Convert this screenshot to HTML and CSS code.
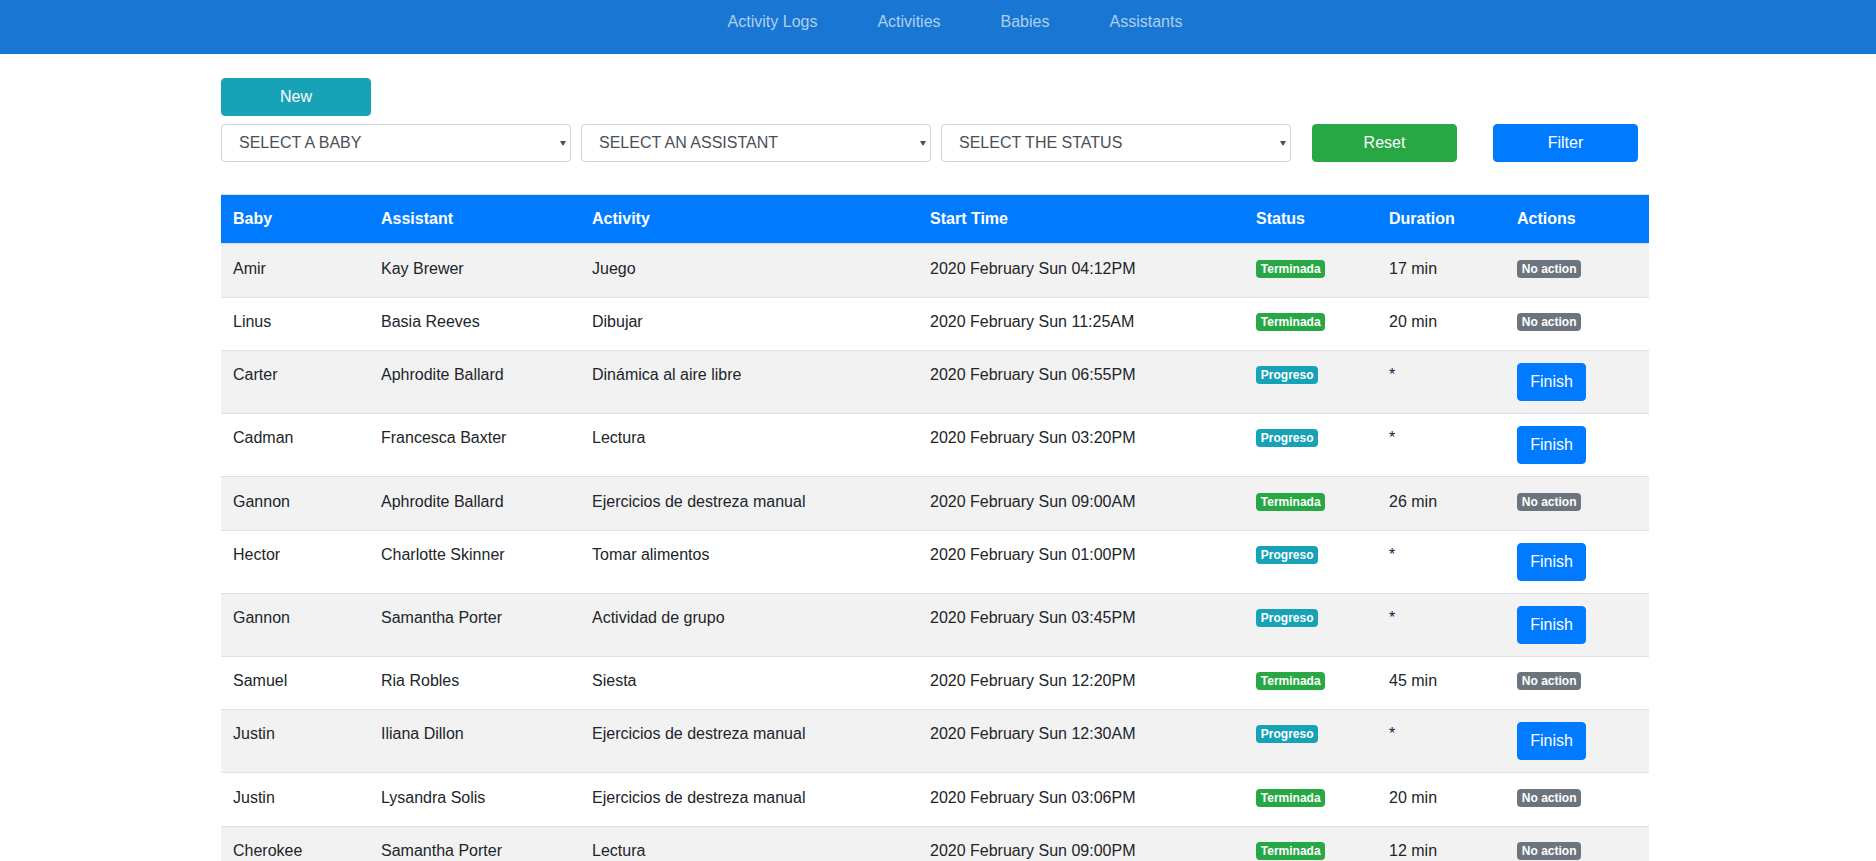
FILE: index.html
```html
<!DOCTYPE html>
<html lang="en">
<head>
<meta charset="utf-8">
<title>Activity Logs</title>
<link rel="stylesheet" href="styles.css">
</head>
<body>
<nav class="topbar">
  <a class="nav-link" href="#">Activity Logs</a>
  <a class="nav-link" href="#">Activities</a>
  <a class="nav-link" href="#">Babies</a>
  <a class="nav-link" href="#">Assistants</a>
</nav>
<main class="page">
  <div class="actions-row">
    <button class="btn btn-info btn-new">New</button>
  </div>
  <div class="filters">
    <div class="select-wrap"><select class="select"><option>SELECT A BABY</option></select></div>
    <div class="select-wrap"><select class="select"><option>SELECT AN ASSISTANT</option></select></div>
    <div class="select-wrap"><select class="select"><option>SELECT THE STATUS</option></select></div>
    <button class="btn btn-success btn-reset">Reset</button>
    <button class="btn btn-primary btn-filter">Filter</button>
  </div>
  <table class="table">
    <colgroup>
      <col class="c-baby"><col class="c-assistant"><col class="c-activity"><col class="c-start"><col class="c-status"><col class="c-duration"><col class="c-actions">
    </colgroup>
    <thead>
      <tr><th>Baby</th><th>Assistant</th><th>Activity</th><th>Start Time</th><th>Status</th><th>Duration</th><th>Actions</th></tr>
    </thead>
    <tbody>
      <tr><td>Amir</td><td>Kay Brewer</td><td>Juego</td><td>2020 February Sun 04:12PM</td><td><span class="badge badge-success">Terminada</span></td><td>17 min</td><td><span class="badge badge-secondary">No action</span></td></tr>
      <tr><td>Linus</td><td>Basia Reeves</td><td>Dibujar</td><td>2020 February Sun 11:25AM</td><td><span class="badge badge-success">Terminada</span></td><td>20 min</td><td><span class="badge badge-secondary">No action</span></td></tr>
      <tr class="tall"><td>Carter</td><td>Aphrodite Ballard</td><td>Dinámica al aire libre</td><td>2020 February Sun 06:55PM</td><td><span class="badge badge-info">Progreso</span></td><td>*</td><td><button class="btn btn-primary btn-finish">Finish</button></td></tr>
      <tr class="tall"><td>Cadman</td><td>Francesca Baxter</td><td>Lectura</td><td>2020 February Sun 03:20PM</td><td><span class="badge badge-info">Progreso</span></td><td>*</td><td><button class="btn btn-primary btn-finish">Finish</button></td></tr>
      <tr><td>Gannon</td><td>Aphrodite Ballard</td><td>Ejercicios de destreza manual</td><td>2020 February Sun 09:00AM</td><td><span class="badge badge-success">Terminada</span></td><td>26 min</td><td><span class="badge badge-secondary">No action</span></td></tr>
      <tr class="tall"><td>Hector</td><td>Charlotte Skinner</td><td>Tomar alimentos</td><td>2020 February Sun 01:00PM</td><td><span class="badge badge-info">Progreso</span></td><td>*</td><td><button class="btn btn-primary btn-finish">Finish</button></td></tr>
      <tr class="tall"><td>Gannon</td><td>Samantha Porter</td><td>Actividad de grupo</td><td>2020 February Sun 03:45PM</td><td><span class="badge badge-info">Progreso</span></td><td>*</td><td><button class="btn btn-primary btn-finish">Finish</button></td></tr>
      <tr><td>Samuel</td><td>Ria Robles</td><td>Siesta</td><td>2020 February Sun 12:20PM</td><td><span class="badge badge-success">Terminada</span></td><td>45 min</td><td><span class="badge badge-secondary">No action</span></td></tr>
      <tr class="tall"><td>Justin</td><td>Iliana Dillon</td><td>Ejercicios de destreza manual</td><td>2020 February Sun 12:30AM</td><td><span class="badge badge-info">Progreso</span></td><td>*</td><td><button class="btn btn-primary btn-finish">Finish</button></td></tr>
      <tr><td>Justin</td><td>Lysandra Solis</td><td>Ejercicios de destreza manual</td><td>2020 February Sun 03:06PM</td><td><span class="badge badge-success">Terminada</span></td><td>20 min</td><td><span class="badge badge-secondary">No action</span></td></tr>
      <tr><td>Cherokee</td><td>Samantha Porter</td><td>Lectura</td><td>2020 February Sun 09:00PM</td><td><span class="badge badge-success">Terminada</span></td><td>12 min</td><td><span class="badge badge-secondary">No action</span></td></tr>
    </tbody>
  </table>
</main>
</body>
</html>
```

FILE: styles.css
```css
* { box-sizing: border-box; }

html, body {
  margin: 0;
  padding: 0;
  background: #ffffff;
  color: #212529;
  font-family: "Liberation Sans", Arial, sans-serif;
  font-size: 16px;
  line-height: 24px;
}

.topbar {
  height: 54px;
  background: #1976d2;
  display: flex;
  justify-content: center;
  align-items: flex-start;
  padding: 10px 0 0 34px;
}

.nav-link {
  color: #afcfef;
  text-decoration: none;
  padding: 0 30px;
  font-size: 16px;
  line-height: 24px;
}

.page {
  width: 1428px;
  margin: 24px 0 0 221px;
}

.actions-row {
  display: flex;
  height: 38px;
}

.btn {
  font-family: "Liberation Sans", Arial, sans-serif;
  font-size: 16px;
  line-height: 24px;
  padding: 6px 12px;
  border: 1px solid transparent;
  border-radius: 4px;
  color: #ffffff;
  text-align: center;
  cursor: pointer;
  height: 38px;
}

.btn-info { background: #17a2b8; border-color: #17a2b8; }
.btn-success { background: #28a745; border-color: #28a745; }
.btn-primary { background: #007bff; border-color: #007bff; }

.btn-new { width: 150px; }

.filters {
  display: flex;
  align-items: center;
  margin-top: 8px;
  height: 38px;
}

.select-wrap {
  position: relative;
  width: 350px;
  height: 38px;
  margin-right: 10px;
}

.select-wrap:nth-child(3) { margin-right: 0; }

.select-wrap::after {
  content: "";
  position: absolute;
  right: 5px;
  top: 17px;
  border-left: 3px solid transparent;
  border-right: 3px solid transparent;
  border-top: 5px solid #495057;
  pointer-events: none;
}

.select {
  -webkit-appearance: none;
  appearance: none;
  width: 100%;
  height: 38px;
  padding: 6px 20px 6px 17px;
  border: 1px solid #ced4da;
  border-radius: 4px;
  background: #ffffff;
  color: #495057;
  font-family: "Liberation Sans", Arial, sans-serif;
  font-size: 16px;
  line-height: 24px;
}

.btn-reset { width: 145px; margin-left: 21px; }
.btn-filter { width: 145px; margin-left: 36px; }

.table {
  width: 1428px;
  margin-top: 32px;
  border-collapse: collapse;
  table-layout: fixed;
}

.c-baby { width: 148px; }
.c-assistant { width: 211px; }
.c-activity { width: 338px; }
.c-start { width: 326px; }
.c-status { width: 133px; }
.c-duration { width: 128px; }
.c-actions { width: 144px; }

.table th {
  background: #007bff;
  color: #ffffff;
  font-weight: 700;
  text-align: left;
  padding: 12px;
  line-height: 24px;
  border-top: 1px solid #dee2e6;
}

.table td {
  padding: 12.5px 12px 16px;
  line-height: 24px;
  vertical-align: top;
  border-top: 1px solid #dee2e6;
  white-space: nowrap;
}

.table tbody tr:nth-child(odd) { background: #f2f2f2; }

.table tr.tall td { padding-top: 12px; padding-bottom: 12px; }

.badge {
  display: inline-block;
  font-family: "Liberation Sans", Arial, sans-serif;
  font-size: 12px;
  font-weight: 700;
  line-height: 12px;
  padding: 3px 4.8px;
  border-radius: 4px;
  color: #ffffff;
  vertical-align: 1px;
}

.badge-success { background: #28a745; }
.badge-info { background: #17a2b8; }
.badge-secondary { background: #6c757d; }

.btn-finish { width: 69px; padding: 6px 0; display: inline-block; vertical-align: top; }
```
